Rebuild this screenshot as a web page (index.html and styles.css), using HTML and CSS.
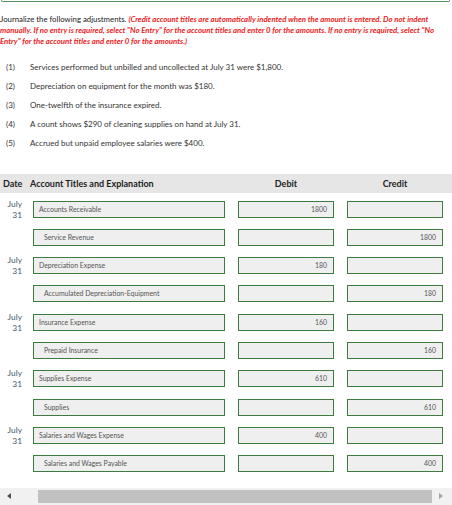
FILE: index.html
```html
<!DOCTYPE html>
<html>
<head>
<meta charset="utf-8">
<link rel="stylesheet" href="styles.css">
</head>
<body>
<div class="topbox"></div>
<p class="intro">Journalize the following adjustments. <em class="note">(Credit account titles are automatically indented when the amount is entered. Do not indent manually. If no entry is required, select "No Entry" for the account titles and enter 0 for the amounts. If no entry is required, select "No Entry" for the account titles and enter 0 for the amounts.)</em></p>
<ol class="items">
  <li><span class="num">(1)</span><span>Services performed but unbilled and uncollected at July 31 were $1,800.</span></li>
  <li><span class="num">(2)</span><span>Depreciation on equipment for the month was $180.</span></li>
  <li><span class="num">(3)</span><span>One-twelfth of the insurance expired.</span></li>
  <li><span class="num">(4)</span><span>A count shows $290 of cleaning supplies on hand at July 31.</span></li>
  <li><span class="num">(5)</span><span>Accrued but unpaid employee salaries were $400.</span></li>
</ol>
<div class="table">
  <div class="head">
    <div class="h-date">Date</div>
    <div class="h-acct">Account Titles and Explanation</div>
    <div class="h-debit">Debit</div>
    <div class="h-credit">Credit</div>
  </div>
  <div class="entries">
    <div class="group">
      <div class="row"><div class="date">July<br>31</div><div class="cell acct"><div class="box">Accounts Receivable</div></div><div class="cell num-cell"><div class="box amt">1800</div></div><div class="cell num-cell"><div class="box amt"></div></div></div>
      <div class="row"><div class="date"></div><div class="cell acct"><div class="box indent">Service Revenue</div></div><div class="cell num-cell"><div class="box amt"></div></div><div class="cell num-cell"><div class="box amt">1800</div></div></div>
    </div>
    <div class="group">
      <div class="row"><div class="date">July<br>31</div><div class="cell acct"><div class="box">Depreciation Expense</div></div><div class="cell num-cell"><div class="box amt">180</div></div><div class="cell num-cell"><div class="box amt"></div></div></div>
      <div class="row"><div class="date"></div><div class="cell acct"><div class="box indent">Accumulated Depreciation-Equipment</div></div><div class="cell num-cell"><div class="box amt"></div></div><div class="cell num-cell"><div class="box amt">180</div></div></div>
    </div>
    <div class="group">
      <div class="row"><div class="date">July<br>31</div><div class="cell acct"><div class="box">Insurance Expense</div></div><div class="cell num-cell"><div class="box amt">160</div></div><div class="cell num-cell"><div class="box amt"></div></div></div>
      <div class="row"><div class="date"></div><div class="cell acct"><div class="box indent">Prepaid Insurance</div></div><div class="cell num-cell"><div class="box amt"></div></div><div class="cell num-cell"><div class="box amt">160</div></div></div>
    </div>
    <div class="group">
      <div class="row"><div class="date">July<br>31</div><div class="cell acct"><div class="box">Supplies Expense</div></div><div class="cell num-cell"><div class="box amt">610</div></div><div class="cell num-cell"><div class="box amt"></div></div></div>
      <div class="row"><div class="date"></div><div class="cell acct"><div class="box indent">Supplies</div></div><div class="cell num-cell"><div class="box amt"></div></div><div class="cell num-cell"><div class="box amt">610</div></div></div>
    </div>
    <div class="group">
      <div class="row"><div class="date">July<br>31</div><div class="cell acct"><div class="box">Salaries and Wages Expense</div></div><div class="cell num-cell"><div class="box amt">400</div></div><div class="cell num-cell"><div class="box amt"></div></div></div>
      <div class="row"><div class="date"></div><div class="cell acct"><div class="box indent">Salaries and Wages Payable</div></div><div class="cell num-cell"><div class="box amt"></div></div><div class="cell num-cell"><div class="box amt">400</div></div></div>
    </div>
  </div>
</div>
<div class="scrollbar">
  <div class="arrow left"></div>
  <div class="thumb"></div>
  <div class="arrow right"></div>
</div>
</body>
</html>
```
FILE: styles.css
```css
html, body {
  margin: 0;
  padding: 0;
  background: #ffffff;
}
body {
  width: 452px;
  height: 505px;
  overflow: hidden;
  font-family: Lato, "Open Sans", sans-serif;
  color: #222;
}
.topbox {
  height: 1px;
  margin: 0 2px 0 1px;
  border: 1px solid #5a935a;
  border-top: none;
  border-radius: 0 0 3px 3px;
}
.intro {
  margin: 12px 0 0 0;
  font-size: 7.8px;
  line-height: 11px;
  color: #222;
  padding-right: 10px;
}
.note {
  color: #ee1c25;
  font-weight: bold;
  font-style: italic;
}
.items {
  list-style: none;
  margin: 15px 0 0 0;
  padding: 0;
  font-size: 8px;
  color: #333;
}
.items li {
  display: flex;
  height: 19px;
  line-height: 11px;
}
.items .num {
  width: 30px;
  padding-left: 6px;
  box-sizing: border-box;
}
.table {
  margin-top: 17px;
}
.head {
  display: grid;
  grid-template-columns: 27px 198px 109px 109px;
  background: #e6e6e6;
  height: 19px;
  align-items: center;
  font-size: 9px;
  font-weight: bold;
  color: #222;
}
.h-date { padding-left: 3px; }
.h-acct { padding-left: 3px; }
.h-debit { text-align: center; padding-left: 13px; }
.h-credit { text-align: center; padding-left: 13px; }
.entries {
  padding-top: 7.5px;
}
.group {
  display: flex;
  flex-direction: column;
}
.row {
  display: grid;
  grid-template-columns: 27px 198px 109px 109px;
  height: 28.3px;
  align-items: start;
}
.date {
  text-align: right;
  padding-right: 5px;
  font-size: 8.4px;
  line-height: 11px;
  color: #44556a;
  margin-top: -2px;
}
.cell.acct { padding-left: 6px; }
.cell.num-cell { padding-left: 13px; }
.box {
  box-sizing: border-box;
  height: 17px;
  border: 1.3px solid #3f7a3f;
  background: #efefef;
  font-size: 6.9px;
  line-height: 14px;
  color: #555;
  padding-left: 5px;
  white-space: nowrap;
}
.cell.acct .box { width: 192px; }
.cell.num-cell .box { width: 96px; }
.box.indent { padding-left: 10px; }
.box.amt { text-align: right; padding-right: 6px; padding-left: 0; }
.scrollbar {
  position: absolute;
  left: 0;
  top: 488px;
  width: 452px;
  height: 17px;
  background: #f1f1f1;
}
.thumb {
  position: absolute;
  left: 38px;
  top: 2px;
  width: 394px;
  height: 13px;
  background: #c1c1c1;
}
.arrow {
  position: absolute;
  top: 5px;
  width: 0;
  height: 0;
  border-top: 3.5px solid transparent;
  border-bottom: 3.5px solid transparent;
}
.arrow.left {
  left: 7px;
  border-right: 4px solid #505050;
}
.arrow.right {
  left: 439px;
  border-left: 4px solid #a3a3a3;
}
```
